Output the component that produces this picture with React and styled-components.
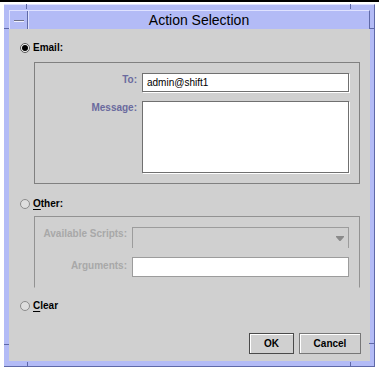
import React from 'react'
import styled, { createGlobalStyle } from 'styled-components'

const GlobalStyle = createGlobalStyle`
  html, body {
    margin: 0;
    padding: 0;
    background: #fff;
  }
  body {
    font-family: "Liberation Sans", Arial, sans-serif;
  }
`

const FRAME = '#b3bbf6'
const FRAME_DARK = '#5f69a8'
const FRAME_LIGHT = '#dfe2ff'
const PANEL = '#d0d0d0'

const Page = styled.div`
  width: 379px;
  height: 372px;
  overflow: hidden;
  background: #fff;
`

const TopRule = styled.div`
  height: 2px;
  background: #000;
`

const Window = styled.div`
  position: relative;
  box-sizing: border-box;
  margin: 2px 0 0 4px;
  width: 371px;
  height: 363px;
  padding: 5px 4px 5px 5px;
  display: flex;
  flex-direction: column;
  background: ${FRAME};
  border-top: 1px solid ${FRAME_LIGHT};
  border-right: 1px solid ${FRAME_DARK};
  border-bottom: 1px solid ${FRAME_DARK};
`

const Tick = styled.span`
  position: absolute;
  background: ${FRAME_DARK};
  width: ${p => (p.$vertical ? 1 : 5)}px;
  height: ${p => (p.$vertical ? 5 : 1)}px;
`

const TitleBar = styled.div`
  box-sizing: border-box;
  height: 19px;
  display: flex;
  background: ${FRAME};
  border-top: 1px solid ${FRAME_LIGHT};
  border-left: 1px solid ${FRAME_LIGHT};
  border-right: 1px solid ${FRAME_DARK};
`

const MinButton = styled.div`
  width: 17px;
  display: flex;
  align-items: center;
  justify-content: center;
  border-right: 1px solid ${FRAME_DARK};
  box-shadow: 1px 0 0 ${FRAME_LIGHT};
`

const MinDash = styled.span`
  width: 10px;
  height: 1px;
  margin-top: 2px;
  background: #6d6f86;
  border-bottom: 1px solid #eef0ff;
`

const Title = styled.div`
  flex: 1;
  display: flex;
  align-items: center;
  justify-content: center;
  font-size: 14px;
  color: #000;
  padding-left: 1px;
`

const Content = styled.div`
  flex: 1;
  display: flex;
  flex-direction: column;
  background: ${PANEL};
  padding-left: 11px;
`

const RadioRow = styled.div`
  height: 12px;
  display: flex;
  align-items: center;
  gap: 3px;
  margin-top: ${p => p.$top}px;
`

const Radio = styled.span`
  position: relative;
  box-sizing: border-box;
  width: 10px;
  height: 10px;
  border-radius: 50%;
  border: 1px solid ${p => (p.$checked ? '#5a5a5a' : '#8c8c8c')};
  background: ${p => (p.$checked ? '#f2f2f2' : '#dedede')};
  &::after {
    content: '';
    display: ${p => (p.$checked ? 'block' : 'none')};
    position: absolute;
    left: 1px;
    top: 1px;
    width: 6px;
    height: 6px;
    border-radius: 50%;
    background: #000;
  }
`

const RadioLabel = styled.span`
  font-size: 10px;
  font-weight: bold;
  line-height: 12px;
  color: #000;
  u {
    text-decoration: underline;
    text-decoration-thickness: 1px;
    text-underline-offset: 2px;
  }
`

const GroupBox = styled.div`
  box-sizing: border-box;
  width: 326px;
  margin: ${p => p.$top}px 0 0 14px;
  border: 1px solid ${p => (p.$disabled ? '#929292' : '#808080')};
  border-bottom-color: ${p => (p.$open ? 'transparent' : p.$disabled ? '#929292' : '#808080')};
`

const FieldGrid = styled.div`
  display: grid;
  grid-template-columns: ${p => p.$labelWidth}px 1fr;
  grid-template-rows: ${p => p.$rows};
  column-gap: 5px;
  row-gap: 9px;
  padding: 10px 10px ${p => p.$bottom}px 0;
`

const FieldLabel = styled.label`
  align-self: start;
  padding-top: ${p => p.$offset}px;
  text-align: right;
  font-size: 10px;
  font-weight: bold;
  line-height: 12px;
  color: ${p => (p.$disabled ? '#a8a8a8' : '#6a6a9e')};
`

const TextField = styled.div`
  box-sizing: border-box;
  background: #fff;
  border: 1px solid ${p => (p.$disabled ? '#9c9c9c' : '#707070')};
  box-shadow: ${p => (p.$disabled ? 'none' : '1px 1px 0 #fff')};
  padding: 3px 4px 0;
  font-size: 10px;
  line-height: 12px;
  color: #000;
  white-space: nowrap;
  overflow: hidden;
`

const Combo = styled.div`
  box-sizing: border-box;
  display: flex;
  align-items: center;
  justify-content: flex-end;
  padding-right: 4px;
  border: 1px solid #9c9c9c;
  border-bottom: none;
`

const ButtonRow = styled.div`
  display: flex;
  justify-content: flex-end;
  gap: 5px;
  margin-top: 21px;
  padding-right: 9px;
`

const Button = styled.div`
  box-sizing: border-box;
  width: ${p => p.$width}px;
  height: 21px;
  display: flex;
  align-items: center;
  justify-content: center;
  font-size: 10px;
  font-weight: bold;
  color: #000;
  background: ${PANEL};
  border: 1px solid ${p => (p.$default ? '#4a4a4a' : '#777')};
  box-shadow: inset 1px 1px 0 #fff;
`

function ComboArrow() {
  return (
    <svg width="8" height="5" viewBox="0 0 8 5">
      <path d="M0 0h8v1L4.5 5h-1L0 1z" fill="#8a8a8a" />
    </svg>
  )
}

export default function App() {
  return (
    <Page>
      <GlobalStyle />
      <TopRule />
      <Window>
        <Tick $vertical style={{ left: 22, top: -1 }} />
        <Tick $vertical style={{ left: 346, top: -1 }} />
        <Tick $vertical style={{ left: 23, bottom: -1 }} />
        <Tick $vertical style={{ left: 346, bottom: -1 }} />
        <Tick style={{ left: 0, top: 23 }} />
        <Tick style={{ right: 0, top: 23 }} />
        <Tick style={{ left: 0, top: 339 }} />
        <Tick style={{ right: 0, top: 338 }} />

        <TitleBar>
          <MinButton>
            <MinDash />
          </MinButton>
          <Title>Action Selection</Title>
        </TitleBar>

        <Content>
          <RadioRow $top={13}>
            <Radio $checked />
            <RadioLabel>Email:</RadioLabel>
          </RadioRow>
          <GroupBox $top={8}>
            <FieldGrid $labelWidth={102} $rows="19px 72px" $bottom={10}>
              <FieldLabel $offset={1}>To:</FieldLabel>
              <TextField>admin@shift1</TextField>
              <FieldLabel $offset={1}>Message:</FieldLabel>
              <TextField />
            </FieldGrid>
          </GroupBox>

          <RadioRow $top={14}>
            <Radio />
            <RadioLabel><u>O</u>ther:</RadioLabel>
          </RadioRow>
          <GroupBox $top={6} $disabled $open>
            <FieldGrid $labelWidth={92} $rows="21px 20px" $bottom={10}>
              <FieldLabel $disabled $offset={1}>Available Scripts:</FieldLabel>
              <Combo>
                <ComboArrow />
              </Combo>
              <FieldLabel $disabled $offset={3}>Arguments:</FieldLabel>
              <TextField $disabled />
            </FieldGrid>
          </GroupBox>

          <RadioRow $top={12}>
            <Radio />
            <RadioLabel><u>C</u>lear</RadioLabel>
          </RadioRow>

          <ButtonRow>
            <Button $width={45} $default>OK</Button>
            <Button $width={62}>Cancel</Button>
          </ButtonRow>
        </Content>
      </Window>
    </Page>
  )
}
